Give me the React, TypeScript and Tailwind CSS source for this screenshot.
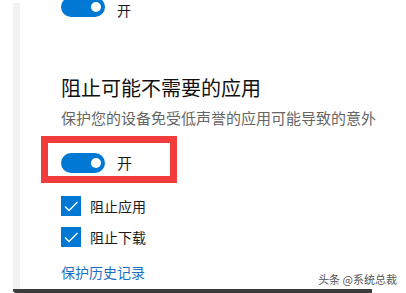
export default function App() {
  const font = { fontFamily: '"Noto Sans CJK SC", "Noto Sans", sans-serif' };
  return (
    <div className="relative flex h-[293px] w-[406px] flex-col overflow-hidden bg-white" style={font}>
      <div className="flex min-h-0 flex-1 pl-[13px]">
        <div className="mt-[3px] w-[7px] bg-[#f2f2f2]" />
        <div className="flex flex-1 flex-col pl-[41px]">
          {/* top toggle, cut off */}
          <div className="-mt-[3px] flex h-[20px] items-start gap-[12px]">
            <Toggle />
            <span className="mt-[3px] text-[14px] leading-[20px] text-[#1a1a1a]">开</span>
          </div>

          <h2 className="mt-[57px] text-[20px] leading-[28px] font-normal text-[#111]">阻止可能不需要的应用</h2>
          <p className="mt-[6px] whitespace-nowrap text-[15px] leading-[20px] text-[#666]">
            保护您的设备免受低声誉的应用可能导致的意外
          </p>

          <div className="-ml-[20px] mt-[8px] flex h-[47px] w-[136px] items-center gap-[12px] border-[7px] border-[#f03c3c] pl-[13px] pt-[6px]">
            <Toggle />
            <span className="text-[15px] leading-[20px] text-[#1a1a1a]">开</span>
          </div>

          <div className="mt-[13px] flex h-[20px] items-center gap-[9px]">
            <Check />
            <span className="text-[14px] leading-[20px] text-[#1a1a1a]">阻止应用</span>
          </div>
          <div className="mt-[11px] flex h-[20px] items-center gap-[9px]">
            <Check />
            <span className="text-[14px] leading-[20px] text-[#1a1a1a]">阻止下载</span>
          </div>

          <a className="mt-[15px] text-[14px] leading-[20px] text-[#1a6fc4]">保护历史记录</a>
        </div>
      </div>
      <div className="ml-[13px] h-[4px] w-[359px] rounded-bl-[3px] bg-[#3c3c3c]" />

      <span className="absolute bottom-[7px] right-[9px] text-[11px] leading-[14px] text-[#555]">头条 @系统总裁</span>
    </div>
  );
}

function Toggle() {
  return (
    <div className="flex h-[20px] w-[44px] shrink-0 items-center justify-end rounded-full bg-[#0078d4] pr-[4px]">
      <div className="h-[10px] w-[10px] rounded-full bg-white" />
    </div>
  );
}

function Check() {
  return (
    <div className="flex h-[20px] w-[20px] shrink-0 items-center justify-center bg-[#0078d4]">
      <svg width="20" height="20" viewBox="0 0 20 20" fill="none">
        <path d="M4 10.5 L8 14.5 L16.5 6" stroke="white" strokeWidth="1.3" />
      </svg>
    </div>
  );
}
